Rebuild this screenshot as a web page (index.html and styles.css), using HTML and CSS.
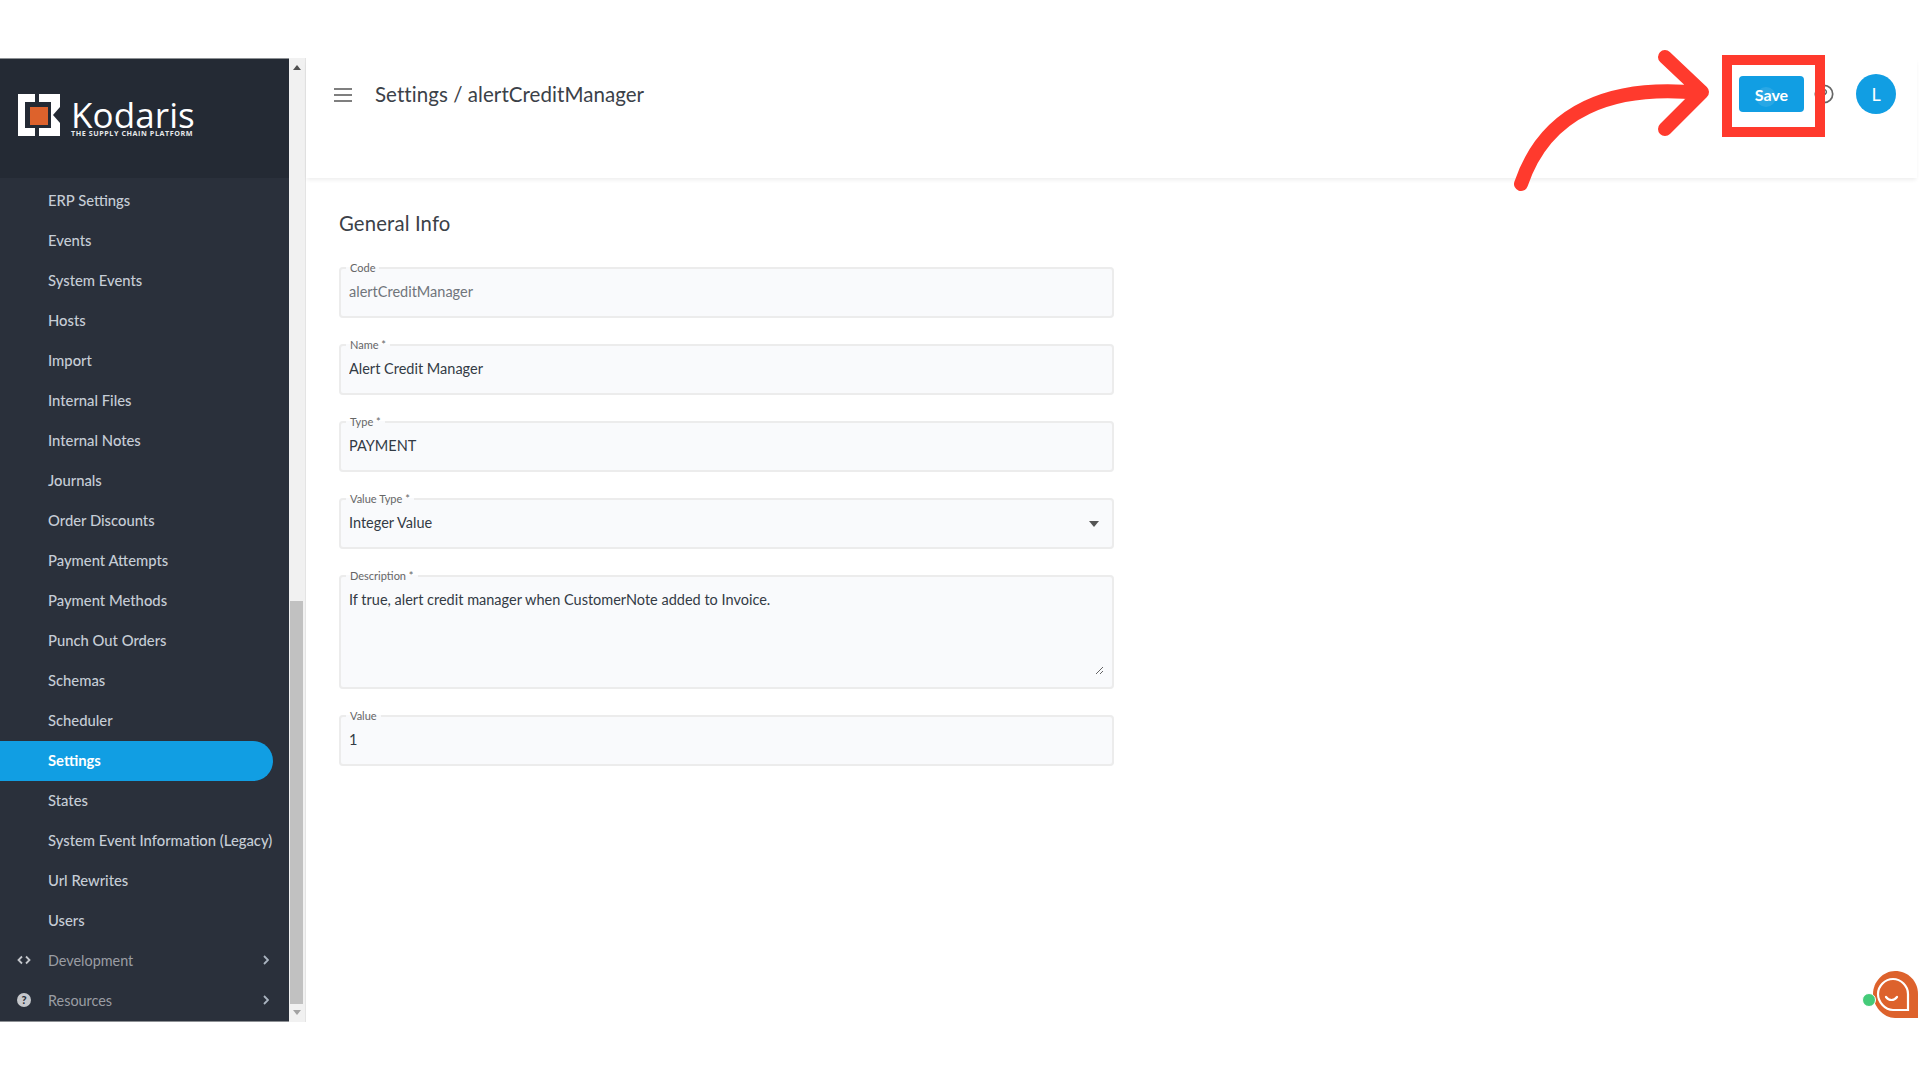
FILE: index.html
```html
<!DOCTYPE html>
<html lang="en">
<head>
<meta charset="utf-8">
<title>Settings / alertCreditManager</title>
<link rel="stylesheet" href="styles.css">
</head>
<body>
<div class="app">
  <aside class="sidebar">
    <div class="side-main">
      <div class="brand">
        <svg class="logo-mark" viewBox="0 0 42 44" width="42" height="44">
          <path fill="#fff" d="M0 1H17V9H7V35H17V43H0Z"/>
          <path fill="#fff" d="M21 1H42V14L35 22L42 30V43H21V35H33V9H21Z"/>
          <rect fill="#dd622c" x="12" y="14" width="18" height="18"/>
        </svg>
        <div class="brand-text">
          <span class="brand-name">Kodaris</span>
          <span class="brand-tag">THE SUPPLY CHAIN PLATFORM</span>
        </div>
      </div>
      <nav class="menu">
        <a class="item">ERP Settings</a>
        <a class="item">Events</a>
        <a class="item">System Events</a>
        <a class="item">Hosts</a>
        <a class="item">Import</a>
        <a class="item">Internal Files</a>
        <a class="item">Internal Notes</a>
        <a class="item">Journals</a>
        <a class="item">Order Discounts</a>
        <a class="item">Payment Attempts</a>
        <a class="item">Payment Methods</a>
        <a class="item">Punch Out Orders</a>
        <a class="item">Schemas</a>
        <a class="item">Scheduler</a>
        <a class="item active">Settings</a>
        <a class="item">States</a>
        <a class="item">System Event Information (Legacy)</a>
        <a class="item">Url Rewrites</a>
        <a class="item">Users</a>
        <a class="item group">
          <svg class="gicon" viewBox="0 0 14 10" width="14" height="10"><path d="M5 1.5 1.5 5 5 8.5M9 1.5 12.5 5 9 8.5" fill="none" stroke="#c4c7cc" stroke-width="1.8"/></svg>
          <span class="glabel">Development</span>
          <svg class="chev" viewBox="0 0 6 10" width="6" height="10"><path d="M1 1l4 4-4 4" fill="none" stroke="#aab4c0" stroke-width="1.8"/></svg>
        </a>
        <a class="item group">
          <span class="qicon">?</span>
          <span class="glabel">Resources</span>
          <svg class="chev" viewBox="0 0 6 10" width="6" height="10"><path d="M1 1l4 4-4 4" fill="none" stroke="#aab4c0" stroke-width="1.8"/></svg>
        </a>
      </nav>
    </div>
    <div class="scrollbar">
      <span class="arrow-up"></span>
      <div class="track"><div class="thumb"></div></div>
      <span class="arrow-down"></span>
    </div>
  </aside>
  <main class="content">
    <header class="topbar">
      <svg class="burger" viewBox="0 0 18 14" width="18" height="14"><path d="M0 1H18M0 7H18M0 13H18" stroke="#555" stroke-width="1.6"/></svg>
      <h1 class="title">Settings / alertCreditManager</h1>
      <div class="actions">
        <button class="save">Save</button>
        <svg class="help" viewBox="0 0 20 20" width="20" height="20"><circle cx="10" cy="10" r="8.7" fill="none" stroke="#666" stroke-width="1.7"/><path d="M7.6 8a2.4 2.4 0 1 1 3.6 2.1c-.8.5-1.2 1-1.2 2" fill="none" stroke="#666" stroke-width="1.5"/><circle cx="10" cy="14.4" r="1" fill="#666"/></svg>
        <div class="avatar">L</div>
      </div>
    </header>
    <section class="form">
      <h2 class="section">General Info</h2>
      <fieldset class="field"><legend>Code</legend><input class="val muted" value="alertCreditManager" readonly></fieldset>
      <fieldset class="field"><legend>Name *</legend><input class="val" value="Alert Credit Manager"></fieldset>
      <fieldset class="field"><legend>Type *</legend><input class="val" value="PAYMENT"></fieldset>
      <fieldset class="field select"><legend>Value Type *</legend><input class="val" value="Integer Value"><span class="caret"></span></fieldset>
      <fieldset class="field area"><legend>Description *</legend><textarea class="val">If true, alert credit manager when CustomerNote added to Invoice.</textarea></fieldset>
      <fieldset class="field"><legend>Value</legend><input class="val" value="1"></fieldset>
    </section>
  </main>
</div>
<div class="chat">
  <svg viewBox="0 0 46 48" width="46" height="48">
    <path fill="#dd622c" d="M22 0C35 0 45 10 45 23V47H22C10 47 0 35 0 23S10 0 22 0Z"/>
    <path fill="#dd622c" stroke="#fff" stroke-width="2.2" d="M20 8C28 8 35 15 35 23V39H20C12 39 5 31 5 23S12 8 20 8Z"/>
    <path d="M13 26c3 4 8 4 11 0" fill="none" stroke="#fff" stroke-width="2.2" stroke-linecap="round"/>
  </svg>
  <span class="online"></span>
</div>
<svg class="annot" viewBox="0 0 1920 1080" width="1920" height="1080">
  <path d="M1521 184C1546 110 1612 84 1700 93M1665 57 1702 92 1665 129" fill="none" stroke="#ff3a2d" stroke-width="14" stroke-linecap="round" stroke-linejoin="round"/>
  <rect x="1727" y="60" width="93" height="72" fill="none" stroke="#ff3a2d" stroke-width="10"/>
</svg>
</body>
</html>
```
FILE: styles.css
```css
* { box-sizing: border-box; }
html, body { margin: 0; height: 100%; background: #fff; overflow: hidden; }
body { font-family: "Lato", "Noto Sans", sans-serif; color: #333b45; padding-top: 58px; }
.app { display: flex; height: 964px; }
.sidebar { width: 306px; display: flex; flex: none; }
.side-main { width: 289px; background: #2a303b; border-top: 1px solid #8d9094; border-bottom: 1px solid #8d9094; display: flex; flex-direction: column; }
.brand { height: 119px; background: #242a34; padding: 34px 0 0 18px; display: flex; gap: 11px; align-items: flex-start; flex: none; }
.logo-mark { display: block; flex: none; }
.brand-text { display: flex; flex-direction: column; margin-top: 6px; }
.brand-name { font-family: "Open Sans", sans-serif; font-size: 35px; line-height: 31px; color: #fff; letter-spacing: .1px; }
.brand-tag { font-family: "Open Sans", sans-serif; font-size: 7.2px; line-height: 7px; font-weight: 700; color: #e6e8ea; letter-spacing: .55px; white-space: nowrap; }
.menu { display: flex; flex-direction: column; padding-top: 2px; }
.item { height: 40px; padding-left: 48px; display: flex; align-items: center; font-size: 14.8px; font-weight: 500; color: #c6cdd6; white-space: nowrap; }
.item.active { width: 273px; margin: 1px 0 -1px; padding-bottom: 2px; background: #119ee3; color: #fff; font-weight: 700; border-radius: 0 20px 20px 0; }
.item.group { padding-left: 17px; padding-right: 20px; color: #9a9da3; font-size: 14.4px; font-weight: 400; }
.gicon { flex: none; }
.glabel { margin-left: 17px; flex: 1; }
.chev { flex: none; }
.qicon { width: 14px; height: 14px; border-radius: 50%; background: #c6c8cc; color: #2a303b; font-size: 11px; font-weight: 900; line-height: 14px; text-align: center; flex: none; }
.scrollbar { width: 17px; background: #f1f1f1; border-right: 1px solid #e4e4e4; display: flex; flex-direction: column; align-items: center; }
.arrow-up { width: 0; height: 0; border: 4px solid transparent; border-top: 0; border-bottom: 5px solid #505050; margin: 7px 0 6px; flex: none; }
.arrow-down { width: 0; height: 0; border: 4px solid transparent; border-bottom: 0; border-top: 5px solid #a3a3a3; margin: 6px 0 7px; flex: none; }
.track { flex: 1; width: 100%; display: flex; flex-direction: column; justify-content: flex-end; padding: 0 2px 0 1px; }
.thumb { height: 403px; background: #c1c1c1; }
.content { flex: 1; display: flex; flex-direction: column; min-width: 0; }
.topbar { height: 120px; flex: none; display: flex; align-items: flex-start; padding: 30px 21px 0 28px; box-shadow: 0 3px 4px -1px rgba(0,0,0,.07); background: #fff; margin-right: 3px; }
.burger { flex: none; }
.title { margin: 0 0 0 23px; font-size: 20.5px; line-height: 12px; font-weight: 400; color: #3b4148; letter-spacing: .06px; white-space: nowrap; }
.actions { margin-left: auto; display: flex; align-items: center; margin-top: -14px; }
.save { position: relative; overflow: hidden; width: 65px; height: 36px; border: 0; border-radius: 4px; background: #119ee3; color: #fff; font: 700 16px "Lato", sans-serif; padding: 0; }
.save::after { content: ""; position: absolute; left: 17px; top: 11px; width: 20px; height: 20px; border-radius: 50%; background: rgba(255,255,255,.1); }
.help { margin-left: 10px; flex: none; }
.avatar { width: 40px; height: 40px; border-radius: 50%; background: #119ee3; color: #fff; font-size: 18px; display: flex; align-items: center; justify-content: center; margin-left: 22px; }
.form { padding: 33px 0 0 33px; width: 808px; display: flex; flex-direction: column; }
.section { margin: 0 0 27px; font-size: 20.3px; line-height: 24px; font-weight: 400; color: #3b4148; letter-spacing: .15px; }
.field { position: relative; margin: 0 0 21px; padding: 0 8px; height: 56px; min-width: 0; background: #f9fafc; border: 2px solid #ececec; border-radius: 4px; }
.field legend { font-size: 11px; line-height: 11px; color: #666; padding: 0 4px; margin-left: -3px; }
.field.area { height: 119px; margin-bottom: 21px; }
.val { display: block; width: 100%; border: 0; outline: 0; background: transparent; padding: 0; font: 14.5px/20px "Lato", sans-serif; color: #333b45; height: 24px; margin-top: 6px; }
.val.muted { color: #70757b; }
textarea.val { height: 85px; resize: both; margin-top: 9px; }
.caret { position: absolute; right: 13px; top: 17px; width: 0; height: 0; border: 5px solid transparent; border-bottom: 0; border-top: 6px solid #555; }
.chat { position: absolute; left: 1862px; top: 971px; width: 57px; height: 48px; }
.chat svg { position: absolute; left: 11px; top: 0; }
.online { position: absolute; left: 0; top: 22px; width: 14px; height: 14px; background: #44cb79; border-radius: 50%; border: 1px solid #fff; }
.annot { position: absolute; left: 0; top: 0; pointer-events: none; }
```
